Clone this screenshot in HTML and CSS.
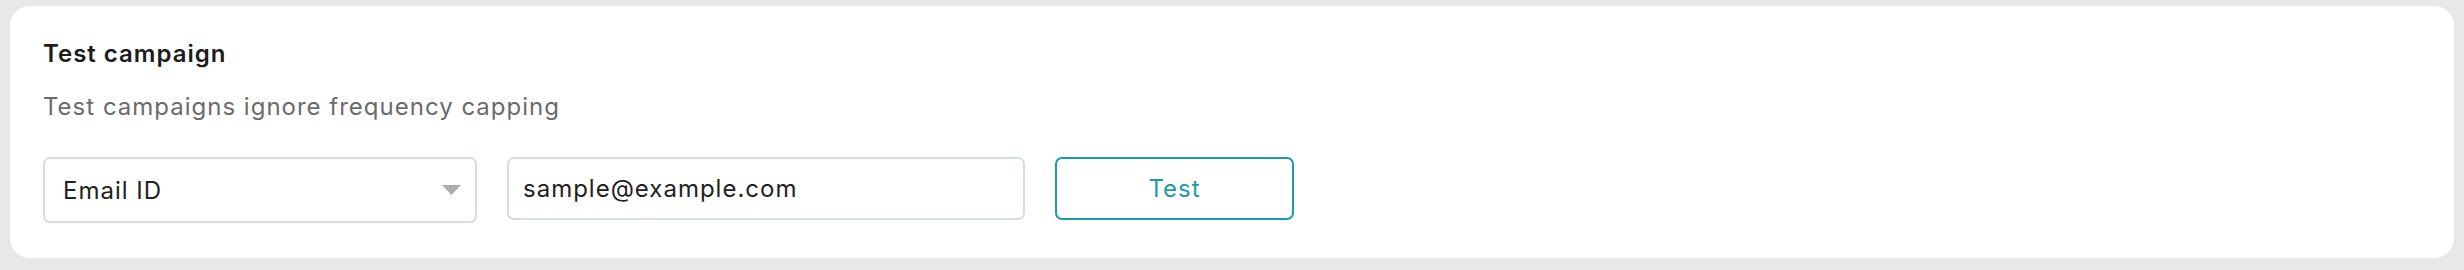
FILE: index.html
```html
<!DOCTYPE html>
<html lang="en">
<head>
    <meta charset="UTF-8">
    <title>Test campaign</title>
    <link rel="stylesheet" href="styles.css">
</head>
<body>
    <!-- Test campaign card -->
    <section class="card">
        <h2 class="card-title">Test campaign</h2>
        <p class="card-text">Test campaigns ignore frequency capping</p>
        <form class="test-form">
            <div class="select">
                <span>Email ID</span>
                <svg class="caret" width="19" height="10" viewBox="0 0 19 10"><path d="M0 0h19L9.5 10z" fill="#acacac"/></svg>
            </div>
            <input type="text" class="text-input" value="sample@example.com">
            <button type="button" class="test-btn">Test</button>
        </form>
    </section>
</body>
</html>
```

FILE: styles.css
```css
body {
    margin: 0;
    padding: 6px 10px;
    background: #e8e8e8;
    font-family: Inter, "Noto Sans", sans-serif;
    letter-spacing: 1px;
}

.card {
    background: #fff;
    border-radius: 20px;
    height: 252px;
    box-sizing: border-box;
    padding: 33px 33px 0;
}

.card-title {
    margin: 0;
    font-size: 24px;
    font-weight: 600;
    line-height: 30px;
    color: #1c1c1c;
}

.card-text {
    margin: 23px 0 0;
    font-size: 24px;
    line-height: 30px;
    color: #6b6b6b;
}

.test-form {
    display: flex;
    align-items: flex-start;
    gap: 30px;
    margin-top: 35px;
}

.select {
    width: 434px;
    height: 66px;
    box-sizing: border-box;
    border: 2px solid #d6dce9;
    border-radius: 7px;
    padding: 0 14px 0 18px;
    display: flex;
    align-items: center;
    justify-content: space-between;
    font-size: 24px;
    color: #222;
}

.text-input {
    width: 518px;
    height: 63px;
    box-sizing: border-box;
    border: 2px solid #d6dce9;
    border-radius: 7px;
    padding: 0 14px;
    font-family: inherit;
    font-size: 24px;
    letter-spacing: inherit;
    color: #222;
    outline: none;
}

.test-btn {
    width: 239px;
    height: 63px;
    box-sizing: border-box;
    border: 2px solid #1a9ca9;
    border-radius: 7px;
    background: #fff;
    color: #1a9ca9;
    font-family: inherit;
    font-size: 24px;
    letter-spacing: inherit;
    cursor: pointer;
}
```
